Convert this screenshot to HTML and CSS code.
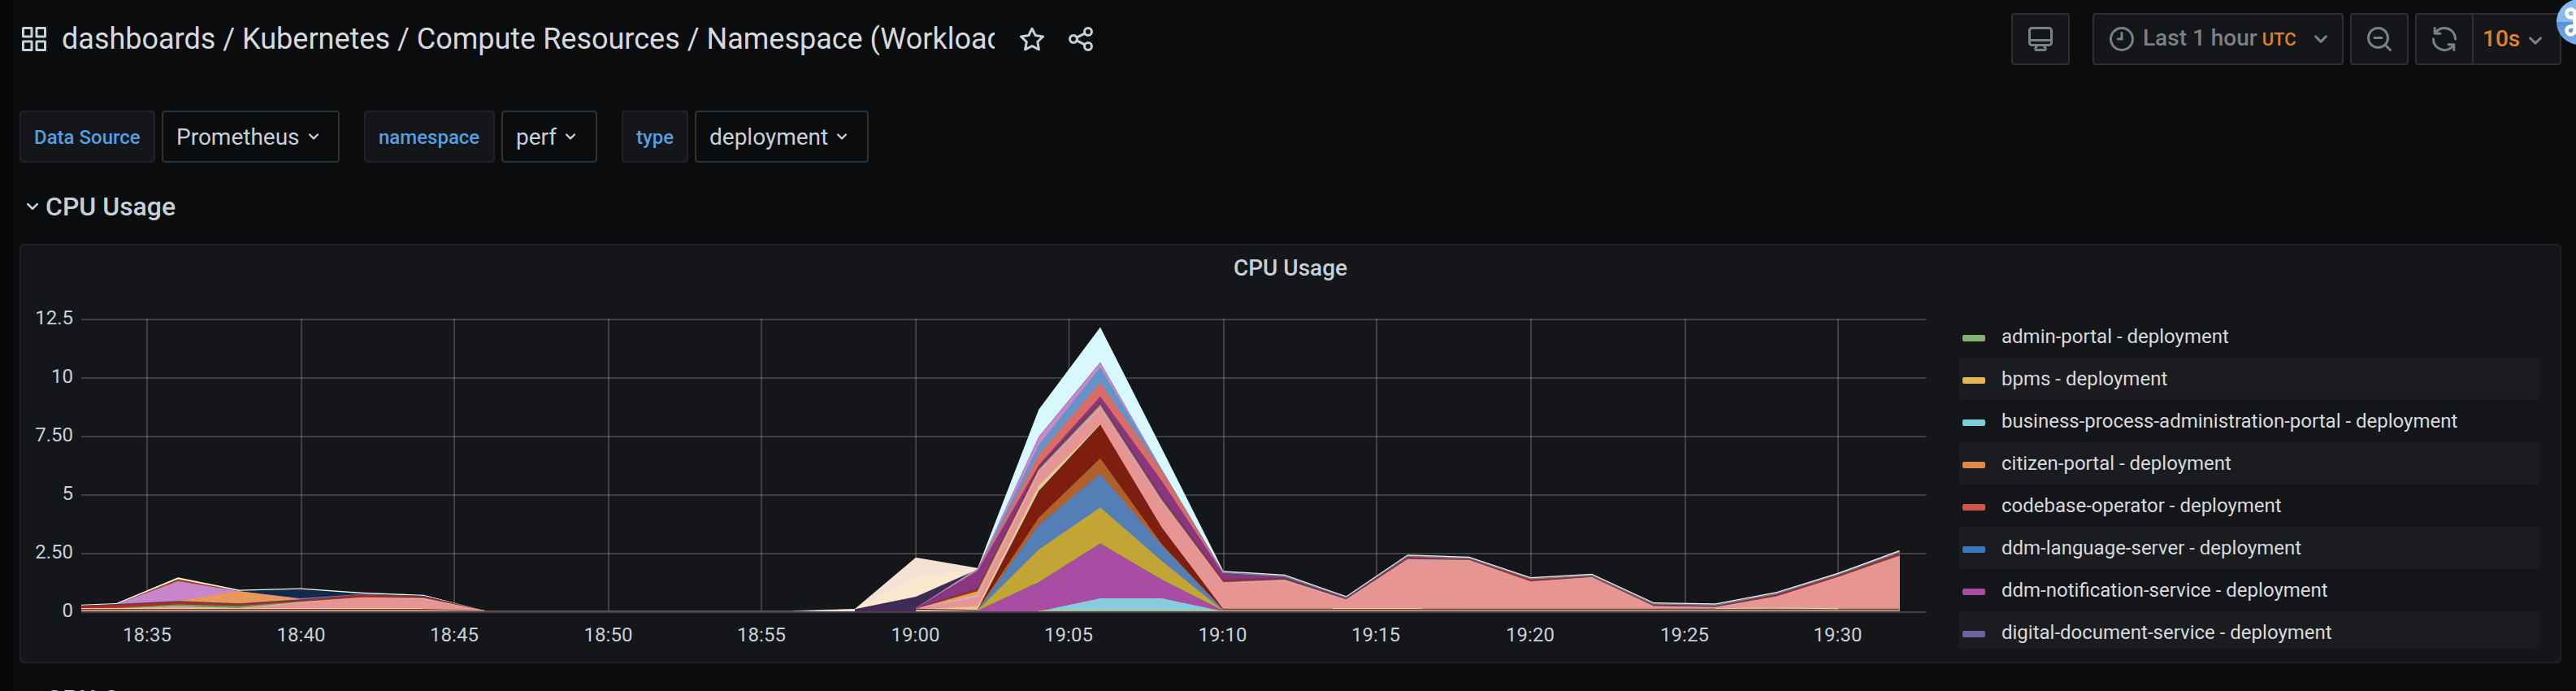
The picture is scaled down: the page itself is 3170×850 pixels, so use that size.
FILE: index.html
```html
<!DOCTYPE html>
<html lang="en">
<head>
<meta charset="utf-8">
<title>Kubernetes / Compute Resources / Namespace (Workloads)</title>
<link rel="stylesheet" href="styles.css">
</head>
<body>
<svg class="defs" width="0" height="0">
  <symbol id="chevron" viewBox="0 0 24 24"><path d="M17,9.17a1,1,0,0,0-1.41,0L12,12.71,8.46,9.17a1,1,0,0,0-1.41,0,1,1,0,0,0,0,1.42l4.24,4.24a1,1,0,0,0,1.42,0L17,10.59A1,1,0,0,0,17,9.17Z"/></symbol>
</svg>
<main class="page">
  <header class="toolbar">
    <svg class="icon" viewBox="0 0 24 24"><path d="M10,13H3a1,1,0,0,0-1,1v7a1,1,0,0,0,1,1h7a1,1,0,0,0,1-1V14A1,1,0,0,0,10,13ZM9,20H4V15H9ZM21,2H14a1,1,0,0,0-1,1v7a1,1,0,0,0,1,1h7a1,1,0,0,0,1-1V3A1,1,0,0,0,21,2ZM20,9H15V4h5Zm1,4H14a1,1,0,0,0-1,1v7a1,1,0,0,0,1,1h7a1,1,0,0,0,1-1V14A1,1,0,0,0,21,13Zm-1,7H15V15h5ZM10,2H3A1,1,0,0,0,2,3v7a1,1,0,0,0,1,1h7a1,1,0,0,0,1-1V3A1,1,0,0,0,10,2ZM9,9H4V4H9Z"/></svg>
    <h1 class="title">dashboards / Kubernetes / Compute Resources / Namespace (Workload</h1>
    <svg class="icon icon-star" viewBox="0 0 24 24"><path d="M22,9.67A1,1,0,0,0,21.14,9l-5.69-.83L12.9,3a1,1,0,0,0-1.8,0L8.55,8.16,2.86,9a1,1,0,0,0-.81.68,1,1,0,0,0,.25,1l4.13,4-1,5.68A1,1,0,0,0,6.9,21.44L12,18.77l5.1,2.67a.93.93,0,0,0,.46.12,1,1,0,0,0,.59-.19,1,1,0,0,0,.4-1l-1-5.68,4.13-4A1,1,0,0,0,22,9.67Zm-6.15,4a1,1,0,0,0-.29.88l.72,4.2-3.76-2a1.06,1.06,0,0,0-.94,0l-3.76,2,.72-4.2a1,1,0,0,0-.29-.88l-3-3,4.21-.61a1,1,0,0,0,.76-.55L12,5.7l1.88,3.82a1,1,0,0,0,.76.55l4.21.61Z"/></svg>
    <svg class="icon icon-share stroke" viewBox="0 0 24 24"><circle cx="18" cy="6" r="3"/><circle cx="6" cy="12" r="3"/><circle cx="18" cy="18" r="3"/><path d="M8.7 10.7 15.3 7.4M8.7 13.3 15.3 16.6"/></svg>
    <div class="actions">
      <button class="btn btn-tv"><svg class="icon" viewBox="0 0 24 24"><path d="M19,2H5A3,3,0,0,0,2,5V15a3,3,0,0,0,3,3H7.64l-.58,1a2,2,0,0,0,0,2,2,2,0,0,0,1.75,1h6.46A2,2,0,0,0,17,21a2,2,0,0,0,0-2l-.59-1H19a3,3,0,0,0,3-3V5A3,3,0,0,0,19,2ZM8.77,20,10,18H14l1.2,2ZM20,15a1,1,0,0,1-1,1H5a1,1,0,0,1-1-1V14H20Zm0-3H4V5A1,1,0,0,1,5,4H19a1,1,0,0,1,1,1Z"/></svg></button>
      <button class="btn btn-time">
        <svg class="icon stroke" viewBox="0 0 24 24"><circle cx="12" cy="12" r="9"/><path d="M12 7v5H9"/></svg>
        <span class="range">Last 1 hour</span><span class="utc">UTC</span>
        <svg class="icon time-chevron"><use href="#chevron"/></svg>
      </button>
      <button class="btn btn-zoom"><svg class="icon stroke" viewBox="0 0 24 24"><circle cx="11" cy="11" r="8"/><path d="M8 11h6M16.8 16.8 21 21"/></svg></button>
      <div class="btn-group">
        <button class="btn btn-sync"><svg class="icon" viewBox="0 0 24 24"><path d="M19.91,15.51H15.38a1,1,0,0,0,0,2h2.4A8,8,0,0,1,4,12a1,1,0,0,0-2,0,10,10,0,0,0,16.88,7.23V21a1,1,0,0,0,2,0V16.5A1,1,0,0,0,19.91,15.51ZM12,2A10,10,0,0,0,5.12,4.77V3a1,1,0,0,0-2,0V7.5a1,1,0,0,0,1,1h4.5a1,1,0,0,0,0-2H6.22A8,8,0,0,1,20,12a1,1,0,0,0,2,0A10,10,0,0,0,12,2Z"/></svg></button>
        <button class="btn btn-interval"><span>10s</span><svg class="icon"><use href="#chevron"/></svg></button>
      </div>
    </div>
    <div class="badge"><svg viewBox="0 0 56 56" width="56" height="56"><path d="M22.500 24V17.500a5 5 0 1 0-5 5H38.500a5 5 0 1 0-5-5V38.500a5 5 0 1 0 5-5H17.500a5 5 0 1 0 5 5V22"/></svg></div>
  </header>

  <section class="variables">
    <label class="var-label var-source">Data Source</label>
    <div class="var-select sel-source">Prometheus<svg class="icon-sm"><use href="#chevron"/></svg></div>
    <label class="var-label var-ns">namespace</label>
    <div class="var-select sel-ns">perf<svg class="icon-sm"><use href="#chevron"/></svg></div>
    <label class="var-label var-type">type</label>
    <div class="var-select sel-type">deployment<svg class="icon-sm"><use href="#chevron"/></svg></div>
  </section>

  <h2 class="row-title"><svg class="icon-md"><use href="#chevron"/></svg>CPU Usage</h2>

  <section class="panel">
    <h3 class="panel-title">CPU Usage</h3>
    <div class="panel-body">
      <svg class="chart" viewBox="26 366 2385 448" width="2385" height="448">
        <g class="grid">
          <path d="M100 393H2370M100 465H2370M100 537H2370M100 609H2370M100 681H2370"/>
          <path d="M181 392V752M371 392V752M559 392V752M749 392V752M937 392V752M1127 392V752M1315.500 392V752M1506 392V752M1694 392V752M1884 392V752M2074 392V752M2262 392V752"/>
        </g>

        <!-- 18:33 to 18:46 -->
        <polygon fill="#f1f5e2" points="100,743.7 143,742 219,710.2 294.500,725.5 370,723.5 446,728.7 521.500,731.7 597,751.3 597,752 100,752"/>
        <polygon fill="#96501f" points="100,745 143,743.5 219,712.3 294.500,727 294.500,752 100,752"/>
        <polygon fill="#ca86cc" points="100,745 143,743.5 219,715 294.500,727.3 370,736 446,752 100,752"/>
        <polygon fill="#13294c" points="294.500,726.700 370,724.800 446,730.3 521.500,733 597,751.3 597,752 294.500,752"/>
        <polygon fill="#9b7bae" points="294.500,727.3 370,736 446,730.700 521.500,733 597,751.3 597,752 294.500,752"/>
        <polygon fill="#ea985a" points="219,739 294.500,727.3 370,737 446,752 219,752"/>
        <polygon fill="#33427e" points="100,744.700 143,743 219,739.3 294.500,742.2 370,737.3 446,731.2 521.500,733 597,751.3 597,752 100,752"/>
        <polygon fill="#b02c1a" points="100,745.7 143,744 219,740.3 294.500,743.2 370,738.3 446,731.8 521.500,733.8 597,751.3 597,752 100,752"/>
        <polygon fill="#6f9c57" points="100,748.3 143,747.7 219,743.5 294.500,745.5 370,740 446,734.8 521.500,735.8 597,751.3 597,752 100,752"/>
        <polygon fill="#d8c2d0" points="100,748.8 143,748.3 219,746 294.500,748 370,740.6 446,735 521.500,736 597,751.3 597,752 100,752"/>
        <polygon fill="#e69593" points="100,749 143,748.8 219,747 294.500,748.7 370,741 446,735.3 521.500,737 597,751.3 597,752 100,752"/>
        <path class="base" stroke="#e3c9a0" d="M100 748.700H521"/>
        <path class="base" stroke="#7b3c33" d="M100 749.600H521L597 751.500"/>
        <path class="base" stroke="#b08a6a" d="M100 750.700H521L597 751.500"/>
        <path class="base" stroke="#755b5e" d="M597 751.500H980"/>
        <path class="base" stroke="#6d8f9d" d="M976 751.500 1052 749.500"/>

        <!-- 18:58 to 19:02 -->
        <polygon fill="#f4e3d4" points="1052,749 1127,685.7 1203,698.7 1203,752 976,752"/>
        <polygon fill="#f8e9cf" points="1052,749 1127,711.3 1203,699.3 1203,752 1052,752"/>
        <polygon fill="#3d2b56" points="1052,749.3 1127,734 1203,700.5 1203,752 1052,752"/>

        <!-- spike around 19:06 and the tail to 19:32 -->
        <polygon fill="#d7f8fe" points="1127,748 1203,699 1278.300,503.7 1354,402.5 1429.600,551.5 1505.300,702 1505.300,752 1127,752"/>
        <polygon fill="#eceedd" points="1505.300,702.2 1581,706.7 1656.600,733.3 1732,682.3 1808,684.7 1883.600,710 1959,705.7 2035,741 2111,742.3 2186.500,728 2262,704.5 2337.500,676.7 2337.500,752 1505.300,752"/>
        <polygon fill="#8b7280" points="1127,748 1203,699.8 1278.300,537 1354,445.5 1429.600,577 1505.300,703.5 1581,708 1656.600,734.5 1732,683.5 1808,686 1883.600,711.2 1959,707 2035,742.2 2111,743.5 2186.500,729.3 2262,706 2337.500,678.3 2337.500,752 1127,752"/>
        <polygon fill="#ca86cc" points="1127,748 1203,700.3 1278.300,538 1354,446.5 1429.600,577.5 1505.300,704.3 1505.300,752 1127,752"/>
        <polygon fill="#6593c8" points="1127,748 1203,701 1278.300,547.5 1354,451.7 1429.600,578 1505.300,704.3 1581,709 1656.600,735 1732,684.3 1808,686.8 1883.600,712 1959,707.8 2035,743 2111,744.3 2186.500,730 2262,706.7 2337.500,679.2 2337.500,752 1127,752"/>
        <polygon fill="#da6c66" points="1127,748 1203,701.5 1278.300,559 1354,471 1429.600,579 1505.300,705 1505.300,752 1127,752"/>
        <polygon fill="#45417a" points="1505.300,705 1581,709.8 1656.600,735.6 1732,685 1808,687.3 1883.600,712.7 1959,708.5 2035,743.6 2111,745 2186.500,730.8 2262,707.3 2337.500,680 2337.500,752 1505.300,752"/>
        <polygon fill="#8a3580" points="1127,748 1203,702.3 1278.300,572 1354,487.5 1429.600,591.5 1505.300,705.5 1581,710.2 1581,752 1127,752"/>
        <polygon fill="#45397a" points="1127,748.300 1203,723.700 1278.300,574.300 1354,495 1429.600,611 1505.300,713 1581,710.8 1581,752 1127,752"/>
        <polygon fill="#b02c1a" points="1127,748.500 1203,724.7 1278.300,575.3 1354,495.700 1429.600,612 1505.300,713.7 1581,711.5 1656.600,736.2 1732,686 1808,687.800 1883.600,713 1959,708.800 2035,744.2 2111,745.5 2186.500,731.500 2262,708 2337.500,681 2337.500,752 1127,752"/>
        <polygon fill="#83a070" points="1203,727 1278.300,577.3 1354,497.500 1429.600,614.3 1505.300,716 1581,713 1656.600,737.2 1732,687.8 1808,688.800 1883.600,715.2 1959,709.800 2035,745.5 2111,746.8 2186.500,733.500 2262,709.700 2337.500,683.5 2337.500,752 1203,752"/>
        <polygon fill="#e0ab3c" points="1127,748.700 1203,727.3 1278.300,578 1278.300,752 1127,752"/>
        <polygon fill="#d8a5dc" points="1127,748.800 1203,731.500 1278.300,578.7 1354,500 1429.600,616.3 1505.300,716.5 1581,713.5 1656.600,737.6 1732,688.200 1808,689.200 1883.600,715.5 1959,710.200 2035,745.8 2111,747.100 2186.500,733.800 2262,710 2337.500,684 2337.500,752 1127,752"/>
        <polygon fill="#e69593" points="1127,749 1203,734.5 1278.300,581 1354,502.5 1429.600,618 1505.300,717.3 1581,714.7 1656.600,738.3 1732,688.7 1808,689.7 1883.600,715.800 1959,710.7 2035,746.2 2111,747.5 2186.500,734.300 2262,710.300 2337.500,684.3 2337.500,752 1127,752"/>
        <polygon fill="#ecc893" points="1127,749.500 1203,746 1278.300,597.5 1354,521.8 1354,752 1127,752"/>
        <polygon fill="#c5dba5" points="1203,749.700 1278.300,600.300 1354,522 1354,752 1203,752"/>
        <polygon fill="#7d1e11" points="1203,750 1278.300,603.7 1354,522.3 1429.600,648.7 1505.300,749 1505.300,752 1203,752"/>
        <polygon fill="#b1602b" points="1203,750 1278.300,636.7 1354,563.7 1429.600,669.3 1505.300,750 1505.300,752 1203,752"/>
        <polygon fill="#547eb6" points="1203,750.3 1278.300,646 1354,583 1429.600,670.7 1505.300,750 1505.300,752 1203,752"/>
        <polygon fill="#c3a535" points="1203,750.7 1278.300,676 1354,624.3 1429.600,690 1505.300,751 1505.300,752 1203,752"/>
        <polygon fill="#7c7460" points="1203,751 1278.300,715.9 1354,668.2 1429.600,712.7 1505.300,751 1505.300,752 1203,752"/>
        <polygon fill="#a94ca3" points="1203,751.5 1278.300,716.7 1354,669 1429.600,713.5 1505.300,751.3 1505.300,752 1203,752"/>
        <polygon fill="#86ccdc" points="1278.300,752 1354,736 1429.600,736 1505.300,752"/>
        <path class="base" stroke="#5f2550" d="M1052 750.300 1127 749.300 1203 750.800"/>
        <path class="base" stroke="#c9b84f" d="M1278 751.500H1505"/>
        <path class="base" stroke="#5c4a50" d="M1505 749.400H1640M1750 749.400H2337"/>
        <path class="base" stroke="#e0cf9a" d="M1640 748.800H1750M2111 748.500 2186 748 2262 748.700"/>
        <path class="base" stroke="#8a4034" d="M1640 749.700H1800"/>
        <path class="base" stroke="#a98a50" d="M1505 750.500H2337.500"/>
        <path class="base" stroke="#b8868a" d="M1505 751.500H2337.500"/>

        <path class="axis" d="M100 753H2370"/>
        <g class="labels y-labels">
          <text x="90" y="399">12.5</text><text x="90" y="471">10</text><text x="90" y="543">7.50</text><text x="90" y="615">5</text><text x="90" y="687">2.50</text><text x="90" y="759">0</text>
        </g>
        <g class="labels x-labels">
          <text x="181" y="789">18:35</text><text x="370.500" y="789">18:40</text><text x="559" y="789">18:45</text><text x="748.500" y="789">18:50</text><text x="937" y="789">18:55</text><text x="1126.500" y="789">19:00</text><text x="1315" y="789">19:05</text><text x="1504.500" y="789">19:10</text><text x="1693" y="789">19:15</text><text x="1883" y="789">19:20</text><text x="2073" y="789">19:25</text><text x="2261.500" y="789">19:30</text>
        </g>
      </svg>
      <ul class="legend">
        <li><i class="swatch green"></i>admin-portal - deployment</li>
        <li><i class="swatch yellow"></i>bpms - deployment</li>
        <li><i class="swatch cyan"></i>business-process-administration-portal - deployment</li>
        <li><i class="swatch orange"></i>citizen-portal - deployment</li>
        <li><i class="swatch red"></i>codebase-operator - deployment</li>
        <li><i class="swatch blue"></i>ddm-language-server - deployment</li>
        <li><i class="swatch magenta"></i>ddm-notification-service - deployment</li>
        <li><i class="swatch violet"></i>digital-document-service - deployment</li>
      </ul>
    </div>
  </section>

  <h2 class="row-title row-next"><svg class="icon-md"><use href="#chevron"/></svg>CPU Quota</h2>
</main>
</body>
</html>
```
FILE: styles.css
```css
* { box-sizing: border-box; margin: 0; padding: 0; }
body {
  width: 3170px;
  height: 850px;
  overflow: hidden;
  background: #0b0c0e;
  color: #c7d0d9;
  font-family: Roboto, "Liberation Sans", sans-serif;
}
.defs { position: absolute; }
.page {
  position: relative;
  width: 3170px;
  height: 850px;
  overflow: hidden;
  padding-left: 24px;
  background: linear-gradient(90deg, #040506 0, #0b0c0e 26px);
}
svg { display: block; flex: none; fill: currentColor; }
.stroke { fill: none; stroke: currentColor; stroke-width: 2; stroke-linecap: round; }
.icon { width: 36px; height: 36px; }
.icon-sm { width: 28px; height: 28px; }
.icon-md { width: 32px; height: 32px; }

.toolbar { position: relative; display: flex; align-items: center; height: 96px; }
.title {
  width: 1150px;
  margin-left: 14px;
  padding-left: 2px;
  overflow: hidden;
  white-space: nowrap;
  font-size: 36px;
  font-weight: 400;
  line-height: 48px;
  color: #d8d9da;
}
.icon-star { margin-left: 28px; }
.icon-share { margin-left: 24px; }
.actions { display: flex; margin-left: auto; margin-right: 18px; }
.btn {
  display: flex;
  align-items: center;
  height: 64px;
  border: 2px solid #2c2e31;
  border-radius: 4px;
  background: #141619;
  color: #7b8087;
  font: 500 28px/1 Roboto, "Liberation Sans", sans-serif;
}
.btn-tv { width: 72px; justify-content: center; margin-right: 28px; }
.btn-time { width: 309px; padding-left: 16px; margin-right: 8px; }
.range { margin: -2px 0 0 8px; }
.utc { margin: 2px 0 0 6px; font-size: 22px; color: #e0832d; }
.time-chevron { margin-left: auto; margin-right: 8px; }
.btn-zoom { width: 72px; justify-content: center; margin-right: 8px; }
.btn-group { display: flex; }
.btn-sync { width: 72px; justify-content: center; border-radius: 4px 0 0 4px; }
.btn-interval { width: 110px; margin-left: -2px; padding-left: 11px; border-radius: 0 4px 4px 0; color: #e0832d; }
.btn-interval .icon { margin-left: 1px; margin-top: 3px; color: #7b8087; }
.badge {
  position: absolute;
  left: 3122px;
  top: -1px;
  width: 56px;
  height: 56px;
  border-radius: 50%;
  background: linear-gradient(#8abaf6 0 50%, #5590d6 50%, #82b1ea 100%);
}
.badge path { fill: none; stroke: #fff; stroke-width: 4.5; }

.variables { display: flex; height: 64px; margin-top: 40px; }
.var-label {
  display: flex;
  align-items: center;
  padding: 1px 0 0 16px;
  border: 2px solid #202226;
  border-radius: 4px;
  background: #141619;
  color: #539fe0;
  font-size: 24px;
  font-weight: 500;
}
.var-select {
  display: flex;
  align-items: center;
  margin-left: 8px;
  padding-left: 16px;
  border: 2px solid #2c3235;
  border-radius: 4px;
  font-size: 28px;
}
.var-select svg { margin-left: 3px; }
.var-source { width: 167px; }
.sel-source { width: 219px; }
.var-ns { width: 161px; margin-left: 30px; }
.sel-ns { width: 118px; }
.var-type { width: 82px; margin-left: 30px; }
.sel-type { width: 214px; }

.row-title {
  display: flex;
  align-items: center;
  height: 40px;
  margin-top: 34px;
  font-size: 32px;
  font-weight: 500;
}
.row-title svg { margin-right: 0; }

.panel {
  width: 3128px;
  height: 516px;
  margin-top: 26px;
  border: 2px solid #202226;
  border-radius: 6px;
  background: #141619;
}
.panel-title {
  height: 64px;
  padding-top: 11px;
  text-align: center;
  font-size: 28px;
  font-weight: 500;
  line-height: 33px;
}
.panel-body { display: flex; height: 448px; }
.grid { fill: none; stroke: #fff; stroke-opacity: 0.18; stroke-width: 2; }
.axis { fill: none; stroke: #404246; stroke-width: 2; }
.base { fill: none; stroke-width: 1.2; }
.labels { font-size: 24px; fill: #c7d0d9; }
.y-labels { text-anchor: end; }
.x-labels { text-anchor: middle; }
.legend { width: 713px; height: 410px; margin-top: 22px; overflow: hidden; list-style: none; }
.legend li {
  display: flex;
  align-items: center;
  height: 52px;
  padding-left: 4px;
  padding-bottom: 1px;
  color: #d8d9da;
  font-size: 24px;
}
.legend li:nth-child(even) { background: #1a1c20; }
.swatch { width: 28px; height: 8px; margin: 5px 20px 0 0; border-radius: 2px; }
.green { background: #87b073; }
.yellow { background: #e2b951; }
.cyan { background: #81cddc; }
.orange { background: #e18949; }
.red { background: #d2574a; }
.blue { background: #3d77bb; }
.magenta { background: #aa4ba4; }
.violet { background: #6f609e; }
.row-next { margin-top: 24px; }
```
